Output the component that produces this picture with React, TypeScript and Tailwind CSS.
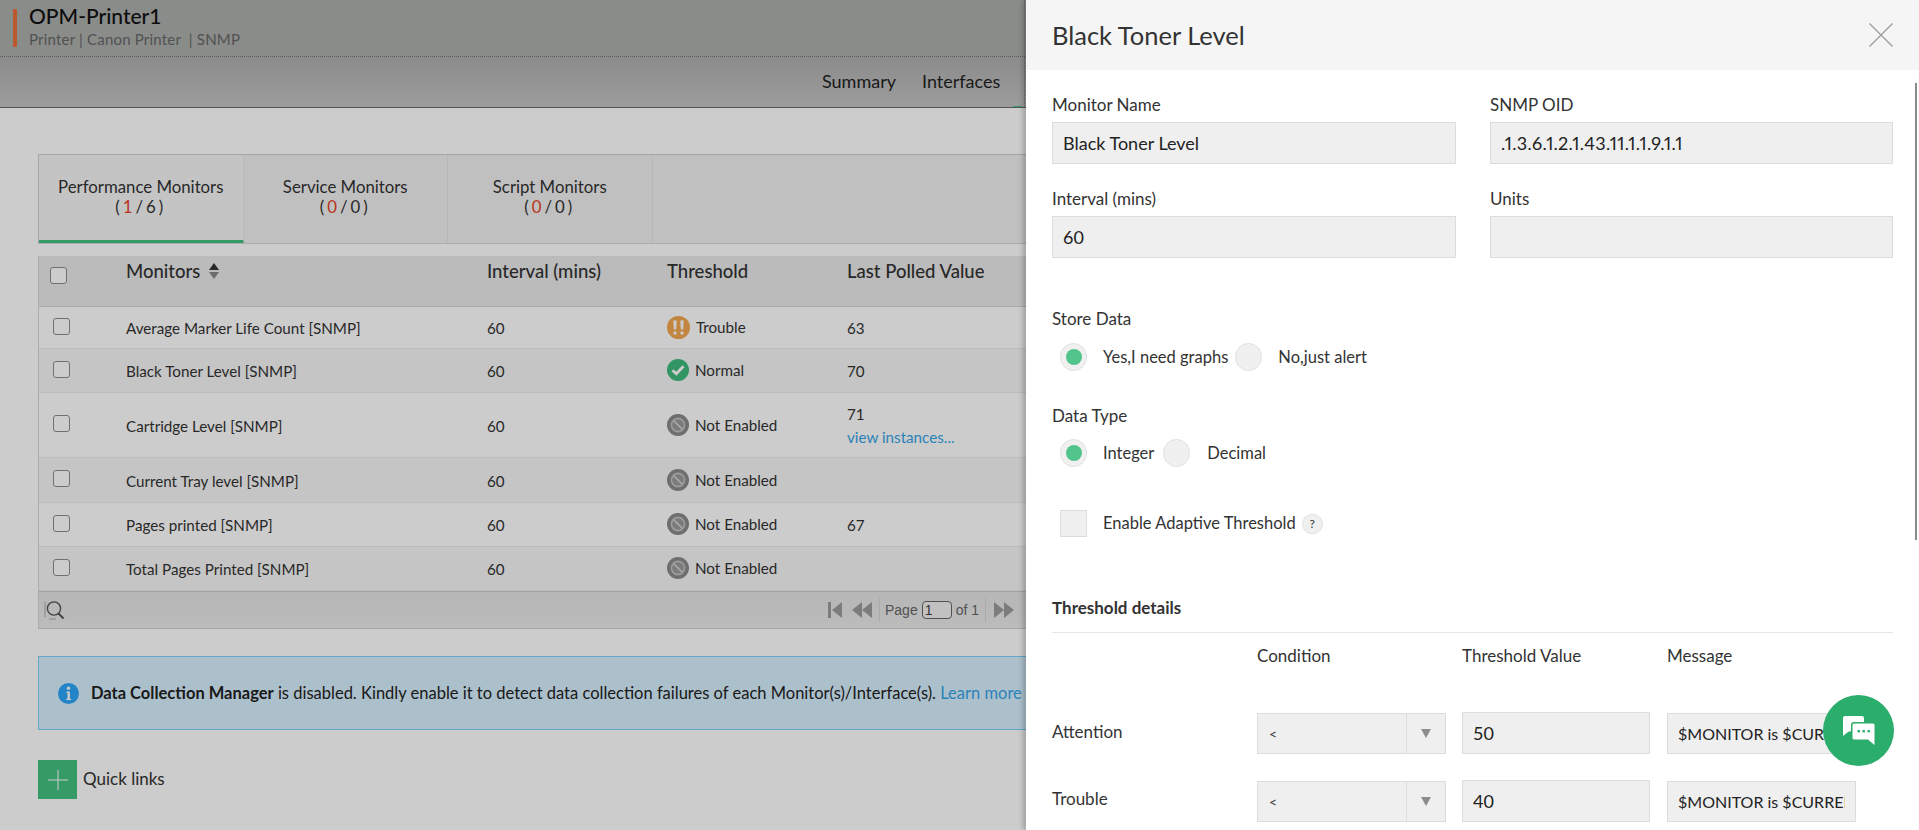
import React from "react";

const font = { fontFamily: '"Lato", "Liberation Sans", sans-serif' };

function Orange() {
  return (
    <svg width="23" height="23" viewBox="0 0 23 23" className="shrink-0">
      <circle cx="11.5" cy="11.5" r="11.5" fill="#f4a850" />
      <path d="M6.3 4.5h3.4l-.5 9H6.8zM13.3 4.5h3.4l-.5 9h-2.4z" fill="#fff" />
      <circle cx="8" cy="17" r="1.7" fill="#fff" />
      <circle cx="15" cy="17" r="1.7" fill="#fff" />
    </svg>
  );
}
function Green() {
  return (
    <svg width="22" height="22" viewBox="0 0 22 22" className="shrink-0">
      <circle cx="11" cy="11" r="11" fill="#3fbb7c" />
      <path d="M5.5 11.2l3.8 3.6 7.2-7.6" fill="none" stroke="#fff" strokeWidth="2.8" />
    </svg>
  );
}
function Off() {
  return (
    <svg width="22" height="22" viewBox="0 0 22 22" className="shrink-0">
      <circle cx="11" cy="11" r="11" fill="#8a8a8a" />
      <circle cx="11" cy="11" r="7.4" fill="#c4c4c4" />
      <circle cx="11" cy="11" r="5.8" fill="#9a9a9a" />
      <path d="M6.8 6.8l8.4 8.4" stroke="#cfcfcf" strokeWidth="1.7" />
    </svg>
  );
}

function Check({ className = "" }: { className?: string }) {
  return <div className={"w-[17px] h-[17px] rounded-[3px] border border-[#8d8d8d] bg-white " + className} />;
}

type Row = { name: string; st: string; val?: string; link?: boolean; h: string; alt?: boolean };
const rows: Row[] = [
  { name: "Average Marker Life Count [SNMP]", st: "Trouble", val: "63", h: "h-[42px]" },
  { name: "Black Toner Level [SNMP]", st: "Normal", val: "70", h: "h-[44px]", alt: true },
  { name: "Cartridge Level [SNMP]", st: "Not Enabled", val: "71", link: true, h: "h-[65px]" },
  { name: "Current Tray level [SNMP]", st: "Not Enabled", h: "h-[45px]", alt: true },
  { name: "Pages printed [SNMP]", st: "Not Enabled", val: "67", h: "h-[44px]" },
  { name: "Total Pages Printed [SNMP]", st: "Not Enabled", h: "h-[44px]", alt: true },
];

function Tab({ label, a, b, active }: { label: string; a: string; b: string; active?: boolean }) {
  return (
    <div
      className={
        "w-[204.5px] h-full border-r border-[#e6e6e6] flex flex-col items-center pt-[22px] text-[16.8px] leading-[20px] text-[#333] " +
        (active ? "border-b-[3px] border-b-[#42c281] bg-[#f6f6f6]" : "")
      }
    >
      <div>{label}</div>
      <div className="tracking-[3px]">
        (<span className="text-[#e8432a]">{a}</span>/{b})
      </div>
    </div>
  );
}

function Box({ text, className = "" }: { text?: string; className?: string }) {
  return (
    <div className={"h-[42px] bg-[#efefef] border border-[#dcdcdc] px-[10px] flex items-center text-[18px] text-[#222] " + className}>
      <div className="overflow-hidden whitespace-nowrap w-full">{text}</div>
    </div>
  );
}

function Radio({ on }: { on?: boolean }) {
  return (
    <div className="w-[27px] h-[28px] rounded-full bg-[#f0f0f0] border border-[#e0e0e0] flex items-center justify-center shrink-0">
      {on && <div className="w-[16px] h-[16px] rounded-full bg-[#52c38a]" />}
    </div>
  );
}

function Select() {
  return (
    <div className="w-[189px] h-[41px] bg-[#efefef] border border-[#dcdcdc] flex text-[14px] text-[#333]">
      <div className="flex-1 pl-[11px] flex items-center">&lt;</div>
      <div className="w-[39px] border-l border-[#dcdcdc] flex items-center justify-center">
        <svg width="10" height="9" viewBox="0 0 10 9">
          <path d="M0 0h10L5 9z" fill="#8c8c8c" />
        </svg>
      </div>
    </div>
  );
}

export default function App() {
  return (
    <div className="relative w-[1919px] h-[830px] overflow-hidden bg-white text-[#333]" style={font}>
      {/* page */}
      <div className="h-[57px] bg-[#adafad] border-b border-dotted border-[#777] pl-[13px] pt-[9px] flex">
        <div className="w-[4px] h-[38px] bg-[#e8703a]" />
        <div className="pl-[12px] -mt-[7px]">
          <div className="text-[21px] leading-[28px] font-medium text-[#111]">OPM-Printer1</div>
          <div className="-mt-[1px] text-[15px] leading-[20px] tracking-[0.2px] text-[#666]">Printer | Canon Printer &nbsp;| SNMP</div>
        </div>
      </div>
      <div className="h-[51px] bg-gradient-to-b from-[#afafaf] to-[#c4c4c4] border-b border-[#6c6c6c] flex pl-[822px] gap-[26px] pt-[12px] text-[18px] leading-[24px] text-[#222]">
        <span>Summary</span>
        <span>Interfaces</span>
      </div>

      <div className="pl-[38px] pr-[40px] pt-[46px]">
        <div className="h-[90px] border border-[#d0d0d0] bg-[#f1f1f1] flex border-b-[#d8d8d8]">
          <Tab label="Performance Monitors" a="1" b="6" active />
          <Tab label="Service Monitors" a="0" b="0" />
          <Tab label="Script Monitors" a="0" b="0" />
        </div>

        <div className="mt-[12px] border-l border-[#d8d8d8]">
          <div className="h-[51px] bg-[#eaeaea] border-b border-[#d8d8d8] grid grid-cols-[87px_361px_180px_180px_1fr] text-[18.5px] font-medium leading-[22px] text-[#333]">
            <div className="pl-[11px] pt-[11px]">
              <Check />
            </div>
            <div className="pt-[4px] flex items-start gap-[9px]">
              Monitors
              <svg width="10" height="16" viewBox="0 0 10 16" className="mt-[3px]">
                <path d="M5 0l5 7H0z" fill="#333" />
                <path d="M5 16l5-7H0z" fill="#888" />
              </svg>
            </div>
            <div className="pt-[4px]">Interval (mins)</div>
            <div className="pt-[4px]">Threshold</div>
            <div className="pt-[4px]">Last Polled Value</div>
          </div>

          {rows.map((r) => (
            <div
              key={r.name}
              className={
                "grid grid-cols-[87px_361px_180px_180px_1fr] items-center text-[15.2px] text-[#333] border-b border-[#ececec] " +
                r.h +
                (r.alt ? " bg-[#f7f7f7]" : " bg-white")
              }
            >
              <div className="pl-[14px] -mt-[3px]">
                <Check />
              </div>
              <div className="pt-[2px]">{r.name}</div>
              <div className="pt-[2px]">60</div>
              <div className="flex items-center gap-[6px]">
                {r.st === "Trouble" ? <Orange /> : r.st === "Normal" ? <Green /> : <Off />}
                <span>{r.st}</span>
              </div>
              <div className="pt-[2px]">
                {r.val && <div className={r.link ? "leading-[23px]" : ""}>{r.val}</div>}
                {r.link && <div className="text-[#36a3e8] leading-[23px]">view instances...</div>}
              </div>
            </div>
          ))}

          <div className="h-[38px] bg-gradient-to-b from-[#e4e4e4] to-[#ebebeb] border-t border-b border-t-[#cccccc] border-b-[#cfcfcf] flex items-center pl-[5px]" style={{ fontFamily: '"Liberation Sans", Arial, sans-serif' }}>
            <svg width="22" height="22" viewBox="0 0 22 22" className="shrink-0">
              <path d="M1 3v15" stroke="#aaa" strokeWidth="1" />
              <circle cx="10" cy="9.5" r="6.6" fill="none" stroke="#555" strokeWidth="1.4" />
              <path d="M14.5 14.5l5 5" stroke="#555" strokeWidth="2" />
              <path d="M5 20h7" stroke="#aaa" strokeWidth="1" />
            </svg>
            <div className="ml-[762px] flex items-center text-[14px] text-[#666] h-[28px]">
              <svg width="15" height="16" viewBox="0 0 15 16">
                <path d="M0 0h3v16H0zM14 0v16L4 8z" fill="#9c9c9c" />
              </svg>
              <svg width="21" height="16" viewBox="0 0 21 16" className="ml-[9px]">
                <path d="M10 0v16L0 8zM20 0v16L10 8z" fill="#9c9c9c" />
              </svg>
              <div className="w-px h-[24px] bg-[#d6d6d6] ml-[6px] mr-[5px]" />
              <span>Page</span>
              <div className="w-[30px] h-[18px] ml-[4px] mr-[4px] rounded-[4px] border border-[#666] bg-[#f2f2f2] pl-[2px] leading-[16px] text-[#444]">1</div>
              <span>of 1</span>
              <div className="w-px h-[24px] bg-[#d6d6d6] ml-[6px] mr-[8px]" />
              <svg width="21" height="16" viewBox="0 0 21 16">
                <path d="M0 0v16l10-8zM10 0v16l10-8z" fill="#9c9c9c" />
              </svg>
            </div>
          </div>
        </div>

        <div className="mt-[27px] h-[74px] bg-[#d8f1fe] border border-[#7cd0fb] flex items-center pl-[19px] text-[16.5px] text-[#222] whitespace-nowrap">
          <svg width="21" height="21" viewBox="0 0 21 21" className="shrink-0">
            <circle cx="10.5" cy="10.5" r="10.5" fill="#2da5fa" />
            <circle cx="10.5" cy="5.3" r="1.7" fill="#fff" />
            <path d="M8.3 8.5h3.6v7.2h1.2v1.3H8.3v-1.3h1.2V9.8H8.3z" fill="#fff" />
          </svg>
          <span className="ml-[12px]">
            <b className="font-bold">Data Collection Manager</b> is disabled. Kindly enable it to detect data collection failures of each Monitor(s)/Interface(s).{" "}
            <span className="text-[#36a3e8]">Learn more</span>
          </span>
        </div>

        <div className="mt-[30px] flex items-center gap-[6px] text-[17px] text-[#333]">
          <div className="w-[39px] h-[39px] bg-[#42c281] flex items-center justify-center">
            <svg width="20" height="20" viewBox="0 0 20 20">
              <path d="M10 0v20M0 10h20" stroke="#fff" strokeWidth="1" />
            </svg>
          </div>
          <span className="pb-[2px]">Quick links</span>
        </div>
      </div>

      {/* dim layer */}
      <div className="absolute inset-0 bg-black/20" />

      {/* edge of the page header behind the panel */}
      <div className="absolute left-[1024px] top-0 h-[106px] border-l border-dotted border-[#666]" />
      <div className="absolute left-[1013px] top-[106px] w-[9px] h-[1px] bg-[#3a9c68]" />

      {/* side panel */}
      <div className="absolute top-0 right-0 bottom-0 w-[893px] bg-white shadow-[-3px_0_5px_rgba(0,0,0,0.22)] text-[#333]">
        <div className="h-[70px] bg-[#f5f5f5] flex items-center justify-between pl-[26px] pr-[26px]">
          <div className="text-[25.5px] text-[#333]">Black Toner Level</div>
          <svg width="24" height="24" viewBox="0 0 24 24">
            <path d="M0.5 0.5l23 23M23.5 0.5l-23 23" stroke="#9a9a9a" strokeWidth="1.2" />
          </svg>
        </div>

        <div className="pl-[26px] pr-[25px] pt-[23px] text-[17px] leading-[23px]">
          <div className="grid grid-cols-[404px_403px] gap-x-[34px] gap-y-[23px]">
            <div>
              <div className="mb-[6px]">Monitor Name</div>
              <Box text="Black Toner Level" />
            </div>
            <div>
              <div className="mb-[6px]">SNMP OID</div>
              <Box text=".1.3.6.1.2.1.43.11.1.1.9.1.1" className="tracking-[0.3px] proportional-nums" />
            </div>
            <div>
              <div className="mb-[6px]">Interval (mins)</div>
              <Box text="60" />
            </div>
            <div>
              <div className="mb-[6px]">Units</div>
              <Box />
            </div>
          </div>

          <div className="mt-[49px]">Store Data</div>
          <div className="mt-[13px] pl-[8px] flex items-center text-[16.5px]">
            <Radio on />
            <span className="ml-[16px]">Yes,I need graphs</span>
            <span className="ml-[7px]"><Radio /></span>
            <span className="ml-[16px]">No,just alert</span>
          </div>

          <div className="mt-[33px]">Data Type</div>
          <div className="mt-[12px] pl-[8px] flex items-center text-[16.5px]">
            <Radio on />
            <span className="ml-[16px]">Integer</span>
            <span className="ml-[9px]"><Radio /></span>
            <span className="ml-[17px]">Decimal</span>
          </div>

          <div className="mt-[43px] pl-[8px] flex items-center text-[16.5px]">
            <div className="w-[27px] h-[27px] bg-[#f0f0f0] border border-[#dcdcdc]" />
            <span className="ml-[16px]">Enable Adaptive Threshold</span>
            <span className="ml-[6px] w-[21px] h-[20px] rounded-full bg-[#f0f0f0] border border-[#e0e0e0] flex items-center justify-center text-[12px] leading-none">?</span>
          </div>

          <div className="mt-[59px] font-bold pb-[13px] border-b border-[#e6e6e6] w-[841px]">Threshold details</div>

          <div className="mt-[11px] grid grid-cols-[205px_205px_205px_189px] w-[841px]">
            <div />
            <div>Condition</div>
            <div>Threshold Value</div>
            <div>Message</div>
          </div>

          <div className="mt-[45px] grid grid-cols-[205px_205px_205px_189px] items-center w-[841px]">
            <div className="pb-[4px]">Attention</div>
            <Select />
            <Box text="50" className="w-[188px]" />
            <Box text="$MONITOR is $CURRENT_VALUE" className="w-[189px] !h-[41px] !text-[16px]" />
          </div>
          <div className="mt-[26px] grid grid-cols-[205px_205px_205px_189px] items-center w-[841px]">
            <div className="pb-[5px]">Trouble</div>
            <Select />
            <Box text="40" className="w-[188px]" />
            <Box text="$MONITOR is $CURRENT_VALUE" className="w-[189px] !h-[41px] !text-[16px]" />
          </div>
        </div>

        {/* scrollbar */}
        <div className="absolute right-[2px] top-[83px] h-[457px] w-[2px] bg-[#8a8a8a]" />

        {/* chat button */}
        <div className="absolute left-[797px] top-[695px] w-[71px] h-[71px] rounded-full bg-[#2bad6b] flex items-center justify-center">
          <svg width="32" height="30" viewBox="0 0 32 30">
            <path d="M2 0h17a2 2 0 0 1 2 2v4H11a3 3 0 0 0-3 3v6l-3 1-5 4V2a2 2 0 0 1 2-2z" fill="#fff" />
            <path d="M11 7h19a2 2 0 0 1 2 2v21l-7-6H11a2 2 0 0 1-2-2V9a2 2 0 0 1 2-2z" fill="#fff" stroke="#2bad6b" strokeWidth="1" />
            <rect x="14.5" y="14" width="2.4" height="2.4" fill="#2bad6b" />
            <rect x="19.5" y="14" width="2.4" height="2.4" fill="#2bad6b" />
            <rect x="24.5" y="14" width="2.4" height="2.4" fill="#2bad6b" />
          </svg>
        </div>
      </div>
    </div>
  );
}
